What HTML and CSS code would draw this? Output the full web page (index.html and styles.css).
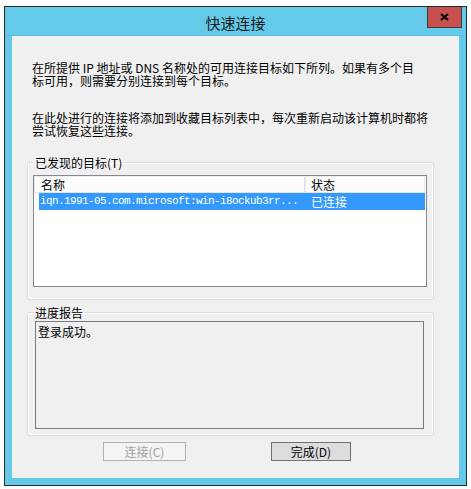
FILE: index.html
```html
<!DOCTYPE html>
<html lang="zh-CN">
<head>
  <meta charset="UTF-8" />
  <title>快速连接</title>
  <link rel="stylesheet" href="styles.css">
</head>
<body>

  <div class="window">
    <div class="titlebar">
      <span></span>
      <div class="title">快速连接</div>
      <button class="close" type="button" aria-label="关闭">
        <svg width="9" height="8" viewBox="0 0 9 8">
          <path d="M1 1 L8 7 M8 1 L1 7" stroke="#000" stroke-width="2" fill="none" />
        </svg>
      </button>
    </div>

    <div class="content">
      <p class="intro">在所提供 IP 地址或 DNS 名称处的可用连接目标如下所列。如果有多个目<br>标可用，则需要分别连接到每个目标。</p>
      <p class="intro second">在此处进行的连接将添加到收藏目标列表中，每次重新启动该计算机时都将<br>尝试恢复这些连接。</p>

      <fieldset class="group targets">
        <legend>已发现的目标(T)</legend>
        <div class="listview">
          <div class="lv-head">
            <div class="col-name">名称</div>
            <div class="col-state">状态</div>
          </div>
          <div class="lv-row selected">
            <div class="col-name mono">iqn.1991-05.com.microsoft:win-i8ockub3rr...</div>
            <div class="col-state">已连接</div>
          </div>
        </div>
      </fieldset>

      <fieldset class="group progress">
        <legend>进度报告</legend>
        <div class="report">登录成功。</div>
      </fieldset>

      <div class="buttons">
        <button class="btn" type="button" disabled>连接(C)</button>
        <button class="btn default" type="button">完成(D)</button>
      </div>
    </div>
  </div>

</body>
</html>
```

FILE: styles.css
```css
:root {
  --frame: #65c9e9;
  --face: #f0f0f0;
  --text: #000;
  --cjk: "Noto Sans CJK SC", "Noto Sans", sans-serif;
}

* {
  box-sizing: border-box;
}

body {
  margin: 0;
  padding: 6px 0 0 4px;
  background: #fff;
  font-family: var(--cjk);
  font-size: 12px;
  color: var(--text);
}

.window {
  width: 463px;
  height: 480px;
  border: 1px solid #2b2b2b;
  background: var(--frame);
  padding: 0 7px 7px 7px;
  display: flex;
  flex-direction: column;
}

.titlebar {
  height: 29px;
  margin: 0 -7px;
  display: grid;
  grid-template-columns: 1fr auto 1fr;
  align-items: start;
  border-bottom: 1px solid #5cbde0;
}

.title {
  font-size: 15px;
  line-height: 20px;
  padding-top: 6px;
  color: #1b1b1b;
}

.close {
  justify-self: end;
  margin: -1px 4px 0 0;
  width: 35px;
  height: 22px;
  padding: 0;
  border: 1px solid #3a3a3a;
  border-top-color: #2b2b2b;
  background: #c75050;
  display: flex;
  align-items: center;
  justify-content: center;
}

.content {
  flex: 1;
  background: var(--face);
  padding: 25px 20px 17px 20px;
}

.intro {
  margin: 0;
  line-height: 13px;
  white-space: nowrap;
}

.intro.second {
  margin-top: 24px;
}

.group {
  margin: 0 5px 0 -5px;
  border: 1px solid #d5dfe5;
  border-radius: 3px;
  box-shadow: inset 0 0 0 1px #fff;
  min-width: 0;
}

.group legend {
  padding: 0 2px;
  line-height: 13px;
}

.targets {
  margin-top: 19px;
  padding: 6px 6px 12px 5px;
}

.progress {
  margin-top: 6px;
  padding: 2px 9px 6px 7px;
}

.progress legend {
  margin-left: -2px;
}

.listview {
  height: 112px;
  border: 1px solid #828790;
  background: #fff;
  padding: 0 1px 0 0;
}

.lv-head {
  display: flex;
  height: 17px;
  line-height: 16px;
  background: #fcfcfc;
  border: 1px solid #e5e5e5;
  border-top-color: #f0f0f0;
}

.lv-head .col-name {
  width: 271px;
  padding-left: 6px;
  border-right: 2px solid #e5e5e5;
}

.lv-head .col-state {
  flex: 1;
  padding-left: 5px;
}

.lv-row {
  display: flex;
  height: 17px;
  line-height: 17px;
  margin-left: 5px;
}

.lv-row.selected {
  background: #3399ff;
  color: #fff;
}

.lv-row .col-name {
  width: 267px;
  padding-left: 1px;
}

.lv-row .col-state {
  flex: 1;
  padding-left: 5px;
}

.mono {
  font-family: "Liberation Mono", monospace;
  font-size: 11px;
  letter-spacing: -0.6px;
  white-space: nowrap;
}

.report {
  height: 108px;
  border: 1px solid #7a7a7a;
  padding: 3px 2px;
  line-height: 13px;
}

.buttons {
  display: flex;
  gap: 85px;
  margin-top: 6px;
  padding-left: 71px;
}

.btn {
  width: 83px;
  height: 19px;
  padding: 0;
  font-family: var(--cjk);
  font-size: 12px;
  line-height: 16px;
  color: var(--text);
  background: #e1e1e1;
  border: 1px solid #707070;
}

.btn:disabled {
  color: #a0a0a0;
  background: #f4f4f4;
  border-color: #adb2b5;
}

.btn.default {
  width: 80px;
  background: #dddddd;
}
```
